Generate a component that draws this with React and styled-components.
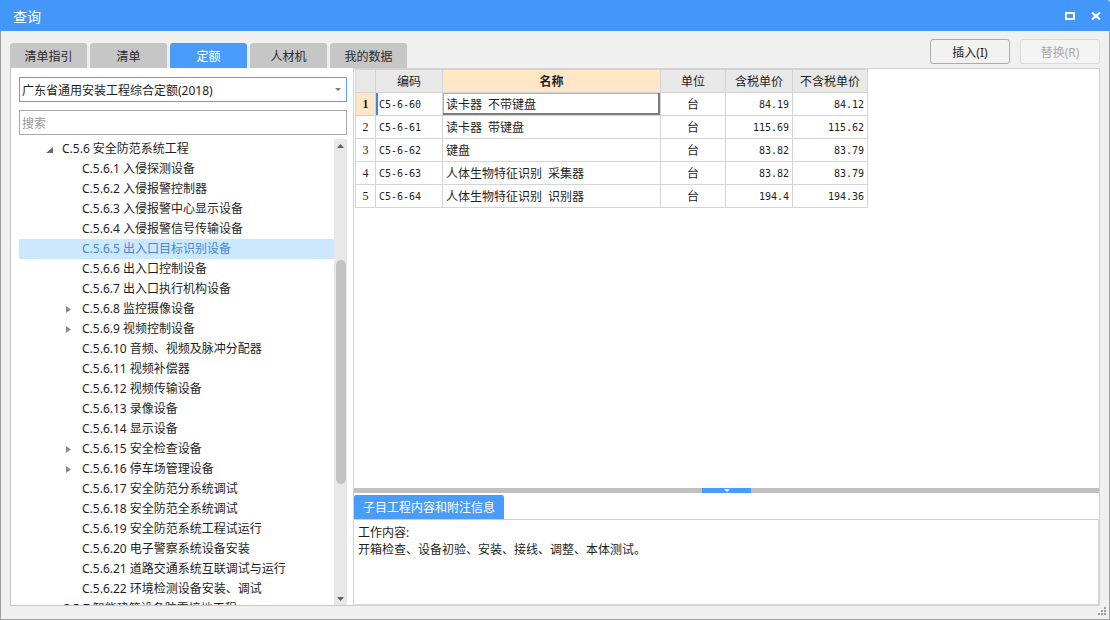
import React from 'react';
import styled, { createGlobalStyle } from 'styled-components';

const GlobalStyle = createGlobalStyle`
  html, body { margin: 0; padding: 0; background: #f0f0f0; }
  body {
    font-family: "Noto Sans", "Noto Sans CJK SC", sans-serif;
    font-size: 12px;
    color: #1e1e1e;
  }
  * { box-sizing: border-box; }
`;

const Window = styled.div`
  width: 1110px;
  height: 620px;
  display: flex;
  flex-direction: column;
  overflow: hidden;
`;

const TitleBar = styled.header`
  height: 31px;
  flex: none;
  background: #4497fa;
  display: flex;
  align-items: center;
  padding: 0 9px 0 13px;
  color: #fff;
  border-top-right-radius: 3px;
`;

const TitleText = styled.h1`
  margin: 0;
  padding-top: 3px;
  flex: 1;
  font-size: 14px;
  font-weight: normal;
  line-height: 1;
`;

const WindowControls = styled.div`
  display: flex;
  align-items: center;
  gap: 16px;
`;

const Body = styled.div`
  flex: 1;
  display: flex;
  flex-direction: column;
  background: #f0f0f0;
  border: 1px solid #a0a0a0;
  border-top: none;
  padding: 0 9px;
`;

const TopRow = styled.div`
  height: 37px;
  flex: none;
  display: flex;
  justify-content: space-between;
`;

const TabStrip = styled.nav`
  align-self: flex-end;
  display: flex;
  gap: 3px;
`;

const Tab = styled.div`
  width: 77px;
  height: 25px;
  display: flex;
  align-items: center;
  justify-content: center;
  border-radius: 3px 3px 0 0;
  background: ${p => (p.$active ? '#4a9cfb' : '#c6c6c6')};
  color: ${p => (p.$active ? '#fff' : '#2a2a2a')};
  font-size: 12px;
`;

const ActionBar = styled.div`
  display: flex;
  gap: 10px;
  padding-top: 8px;
`;

const ActionButton = styled.button`
  width: 80px;
  height: 25px;
  padding: 0;
  font-family: inherit;
  font-size: 12px;
  border-radius: 3px;
  background: ${p => (p.disabled ? '#f4f4f4' : '#f2f2f2')};
  border: 1px solid ${p => (p.disabled ? '#d9d9d9' : '#acacac')};
  color: ${p => (p.disabled ? '#aaaaaa' : '#1e1e1e')};
`;

const Main = styled.div`
  height: 538px;
  flex: none;
  display: flex;
`;

const LeftPanel = styled.section`
  width: 343px;
  flex: none;
  display: flex;
  flex-direction: column;
  background: #fff;
  border-left: 1px solid #c6c6c6;
  border-bottom: 1px solid #c6c6c6;
  padding: 9px 6px 0 8px;
`;

const ComboBox = styled.div`
  height: 25px;
  flex: none;
  display: flex;
  align-items: center;
  justify-content: space-between;
  border: 1px solid #5a9ff0;
  padding: 0 5px 0 2px;
  font-size: 12px;
`;

const SearchBox = styled.div`
  height: 25px;
  flex: none;
  margin-top: 8px;
  display: flex;
  align-items: center;
  border: 1px solid #a9a9a9;
  padding: 0 2px;
  color: #9a9a9a;
  font-size: 12px;
`;

const TreeArea = styled.div`
  margin-top: 4px;
  height: 466px;
  flex: none;
  display: flex;
`;

const TreeList = styled.ul`
  flex: 1;
  margin: 0;
  padding: 0;
  list-style: none;
  overflow: hidden;
`;

const TreeRow = styled.li`
  height: 20px;
  display: flex;
  align-items: center;
  padding-left: ${p => 26 + (p.$level - 1) * 20}px;
  background: ${p => (p.$selected ? '#cce8ff' : 'transparent')};
  color: ${p => (p.$selected ? '#4a86d2' : '#1e1e1e')};
  font-size: 12px;
  line-height: 20px;
  white-space: nowrap;
`;

const Toggle = styled.span`
  width: 17px;
  flex: none;
  display: flex;
  align-items: center;
  padding-left: 1px;
  padding-top: ${p => (p.$expanded ? 2 : 0)}px;
`;

const Scrollbar = styled.div`
  width: 13px;
  flex: none;
  background: #e8e8e8;
  display: flex;
  flex-direction: column;
  align-items: center;
`;

const ScrollArrow = styled.div`
  height: 13px;
  flex: none;
  display: flex;
  align-items: center;
  justify-content: center;
`;

const ScrollTrack = styled.div`
  flex: 1;
  width: 100%;
  display: flex;
  justify-content: center;
`;

const ScrollThumb = styled.div`
  width: 10px;
  margin-top: 108px;
  height: 224px;
  border-radius: 5px;
  background: #c2c2c2;
`;

const RightPanel = styled.section`
  width: 747px;
  flex: none;
  display: flex;
  flex-direction: column;
  background: #fff;
  border: 1px solid #d2d2d2;
`;

const GridArea = styled.div`
  height: 419px;
  flex: none;
  padding-left: 1px;
`;

const Grid = styled.table`
  border-collapse: collapse;
  table-layout: fixed;
  width: 512px;
  font-size: 12px;
`;

const HeadCell = styled.th`
  height: 23px;
  padding: 0;
  border: 1px solid #d4d4d4;
  background: ${p => (p.$accent ? '#ffe6c6' : '#e8e8e8')};
  font-weight: ${p => (p.$accent ? 700 : 400)};
  text-align: center;
  color: #1e1e1e;
`;

const Cell = styled.td`
  height: 23px;
  padding: 0 3px;
  border: 1px solid #d4d4d4;
  white-space: nowrap;
  overflow: hidden;
`;

const RowNumCell = styled(Cell)`
  padding: 0;
  text-align: center;
  font-family: "Liberation Serif", serif;
  font-size: 12px;
  font-weight: ${p => (p.$current ? 700 : 400)};
  background: ${p => (p.$current ? '#ffe6c6' : '#fff')};
  color: #222;
`;

const CodeCell = styled(Cell)`
  font-family: "DejaVu Sans Mono", monospace;
  font-size: 10px;
  box-shadow: ${p => (p.$current ? 'inset 2px 0 0 #3a86f5' : 'none')};
`;

const NameCell = styled(Cell)`
  word-spacing: 3px;
  box-shadow: ${p => (p.$focused ? 'inset -2px -2px 0 #7c7c7c, inset 1px 1px 0 #8cb8e8' : 'none')};
`;

const UnitCell = styled(Cell)`
  text-align: center;
`;

const PriceCell = styled(Cell)`
  text-align: right;
  font-family: "DejaVu Sans Mono", monospace;
  font-size: 10px;
`;

const Splitter = styled.div`
  height: 5px;
  flex: none;
  background: #c0c0c0;
  display: flex;
  justify-content: center;
`;

const SplitterHandle = styled.div`
  width: 49px;
  height: 5px;
  background: #4a9cfb;
  display: flex;
  justify-content: center;
  align-items: center;
`;

const DetailTabs = styled.div`
  margin-top: 2px;
  height: 24px;
  flex: none;
  display: flex;
`;

const DetailTab = styled.div`
  width: 150px;
  display: flex;
  align-items: center;
  justify-content: center;
  background: #4a9cfb;
  color: #fff;
  font-size: 12px;
  border-radius: 2px 2px 0 0;
`;

const DetailBox = styled.div`
  flex: 1;
  border-top: 1px solid #cfcfcf;
  border-bottom: 1px solid #d8d8d8;
  border-right: 1px solid #d8d8d8;
  padding: 4px 4px;
  font-size: 12px;
  line-height: 17px;
`;

const DetailLine = styled.div`
  white-space: nowrap;
`;

const Footer = styled.div`
  height: 13px;
  flex: none;
  display: flex;
  justify-content: flex-end;
  align-items: flex-start;
  padding-top: 1px;
  margin-right: -6px;
`;

const treeItems = [
  { level: 1, toggle: 'open', text: 'C.5.6 安全防范系统工程' },
  { level: 2, text: 'C.5.6.1 入侵探测设备' },
  { level: 2, text: 'C.5.6.2 入侵报警控制器' },
  { level: 2, text: 'C.5.6.3 入侵报警中心显示设备' },
  { level: 2, text: 'C.5.6.4 入侵报警信号传输设备' },
  { level: 2, text: 'C.5.6.5 出入口目标识别设备', selected: true },
  { level: 2, text: 'C.5.6.6 出入口控制设备' },
  { level: 2, text: 'C.5.6.7 出入口执行机构设备' },
  { level: 2, toggle: 'closed', text: 'C.5.6.8 监控摄像设备' },
  { level: 2, toggle: 'closed', text: 'C.5.6.9 视频控制设备' },
  { level: 2, text: 'C.5.6.10 音频、视频及脉冲分配器' },
  { level: 2, text: 'C.5.6.11 视频补偿器' },
  { level: 2, text: 'C.5.6.12 视频传输设备' },
  { level: 2, text: 'C.5.6.13 录像设备' },
  { level: 2, text: 'C.5.6.14 显示设备' },
  { level: 2, toggle: 'closed', text: 'C.5.6.15 安全检查设备' },
  { level: 2, toggle: 'closed', text: 'C.5.6.16 停车场管理设备' },
  { level: 2, text: 'C.5.6.17 安全防范分系统调试' },
  { level: 2, text: 'C.5.6.18 安全防范全系统调试' },
  { level: 2, text: 'C.5.6.19 安全防范系统工程试运行' },
  { level: 2, text: 'C.5.6.20 电子警察系统设备安装' },
  { level: 2, text: 'C.5.6.21 道路交通系统互联调试与运行' },
  { level: 2, text: 'C.5.6.22 环境检测设备安装、调试' },
  { level: 1, toggle: 'closed', text: 'C.5.7 智能建筑设备防雷接地工程' },
];

const rows = [
  ['C5-6-60', '读卡器 不带键盘', '台', '84.19', '84.12'],
  ['C5-6-61', '读卡器 带键盘', '台', '115.69', '115.62'],
  ['C5-6-62', '键盘', '台', '83.82', '83.79'],
  ['C5-6-63', '人体生物特征识别 采集器', '台', '83.82', '83.79'],
  ['C5-6-64', '人体生物特征识别 识别器', '台', '194.4', '194.36'],
];

const tabs = ['清单指引', '清单', '定额', '人材机', '我的数据'];

function TreeToggle({ kind }) {
  if (kind === 'open') {
    return (
      <svg width="7" height="6" viewBox="0 0 7 6">
        <polygon points="7,0 7,6 0,6" fill="#6b6b6b" />
      </svg>
    );
  }
  if (kind === 'closed') {
    return (
      <svg width="5" height="7" viewBox="0 0 5 7">
        <polygon points="0,0 5,3.5 0,7" fill="#8c8c8c" />
      </svg>
    );
  }
  return null;
}

export default function App() {
  return (
    <>
      <GlobalStyle />
      <Window>
        <TitleBar>
          <TitleText>查询</TitleText>
          <WindowControls>
            <svg width="10" height="8" viewBox="0 0 10 8">
              <rect x="1" y="1" width="8" height="6" fill="none" stroke="#fff" strokeWidth="2" />
            </svg>
            <svg width="10" height="8" viewBox="0 0 10 8">
              <path d="M1 0.5 L9 7.5 M9 0.5 L1 7.5" stroke="#fff" strokeWidth="2.2" />
            </svg>
          </WindowControls>
        </TitleBar>
        <Body>
          <TopRow>
            <TabStrip>
              {tabs.map(t => (
                <Tab key={t} $active={t === '定额'}>{t}</Tab>
              ))}
            </TabStrip>
            <ActionBar>
              <ActionButton>插入(I)</ActionButton>
              <ActionButton disabled>替换(R)</ActionButton>
            </ActionBar>
          </TopRow>
          <Main>
            <LeftPanel>
              <ComboBox>
                <span>广东省通用安装工程综合定额(2018)</span>
                <svg width="6" height="3" viewBox="0 0 6 3">
                  <polygon points="0,0 6,0 3,3" fill="#7a7a7a" />
                </svg>
              </ComboBox>
              <SearchBox>搜索</SearchBox>
              <TreeArea>
                <TreeList>
                  {treeItems.map(item => (
                    <TreeRow key={item.text} $level={item.level} $selected={item.selected}>
                      <Toggle $expanded={item.toggle === 'open'}>
                        <TreeToggle kind={item.toggle} />
                      </Toggle>
                      {item.text}
                    </TreeRow>
                  ))}
                </TreeList>
                <Scrollbar>
                  <ScrollArrow>
                    <svg width="7" height="4" viewBox="0 0 7 4">
                      <polygon points="3.5,0 7,4 0,4" fill="#606060" />
                    </svg>
                  </ScrollArrow>
                  <ScrollTrack>
                    <ScrollThumb />
                  </ScrollTrack>
                  <ScrollArrow>
                    <svg width="7" height="4" viewBox="0 0 7 4">
                      <polygon points="0,0 7,0 3.5,4" fill="#606060" />
                    </svg>
                  </ScrollArrow>
                </Scrollbar>
              </TreeArea>
            </LeftPanel>
            <RightPanel>
              <GridArea>
                <Grid>
                  <colgroup>
                    <col style={{ width: 20 }} />
                    <col style={{ width: 67 }} />
                    <col style={{ width: 218 }} />
                    <col style={{ width: 65 }} />
                    <col style={{ width: 67 }} />
                    <col style={{ width: 75 }} />
                  </colgroup>
                  <thead>
                    <tr>
                      <HeadCell />
                      <HeadCell>编码</HeadCell>
                      <HeadCell $accent>名称</HeadCell>
                      <HeadCell>单位</HeadCell>
                      <HeadCell>含税单价</HeadCell>
                      <HeadCell>不含税单价</HeadCell>
                    </tr>
                  </thead>
                  <tbody>
                    {rows.map((r, i) => (
                      <tr key={r[0]}>
                        <RowNumCell $current={i === 0}>{i + 1}</RowNumCell>
                        <CodeCell $current={i === 0}>{r[0]}</CodeCell>
                        <NameCell $focused={i === 0}>{r[1]}</NameCell>
                        <UnitCell>{r[2]}</UnitCell>
                        <PriceCell>{r[3]}</PriceCell>
                        <PriceCell>{r[4]}</PriceCell>
                      </tr>
                    ))}
                  </tbody>
                </Grid>
              </GridArea>
              <Splitter>
                <SplitterHandle>
                  <svg width="6" height="3" viewBox="0 0 6 3">
                    <polygon points="0,0 6,0 3,3" fill="#fff" />
                  </svg>
                </SplitterHandle>
              </Splitter>
              <DetailTabs>
                <DetailTab>子目工程内容和附注信息</DetailTab>
              </DetailTabs>
              <DetailBox>
                <DetailLine>工作内容:</DetailLine>
                <DetailLine>开箱检查、设备初验、安装、接线、调整、本体测试。</DetailLine>
              </DetailBox>
            </RightPanel>
          </Main>
          <Footer>
            <svg width="8" height="8" viewBox="0 0 8 8">
              <rect x="6" y="0" width="2" height="2" fill="#9a9a9a" />
              <rect x="3" y="3" width="2" height="2" fill="#9a9a9a" />
              <rect x="6" y="3" width="2" height="2" fill="#9a9a9a" />
              <rect x="0" y="6" width="2" height="2" fill="#9a9a9a" />
              <rect x="3" y="6" width="2" height="2" fill="#9a9a9a" />
              <rect x="6" y="6" width="2" height="2" fill="#9a9a9a" />
            </svg>
          </Footer>
        </Body>
      </Window>
    </>
  );
}
